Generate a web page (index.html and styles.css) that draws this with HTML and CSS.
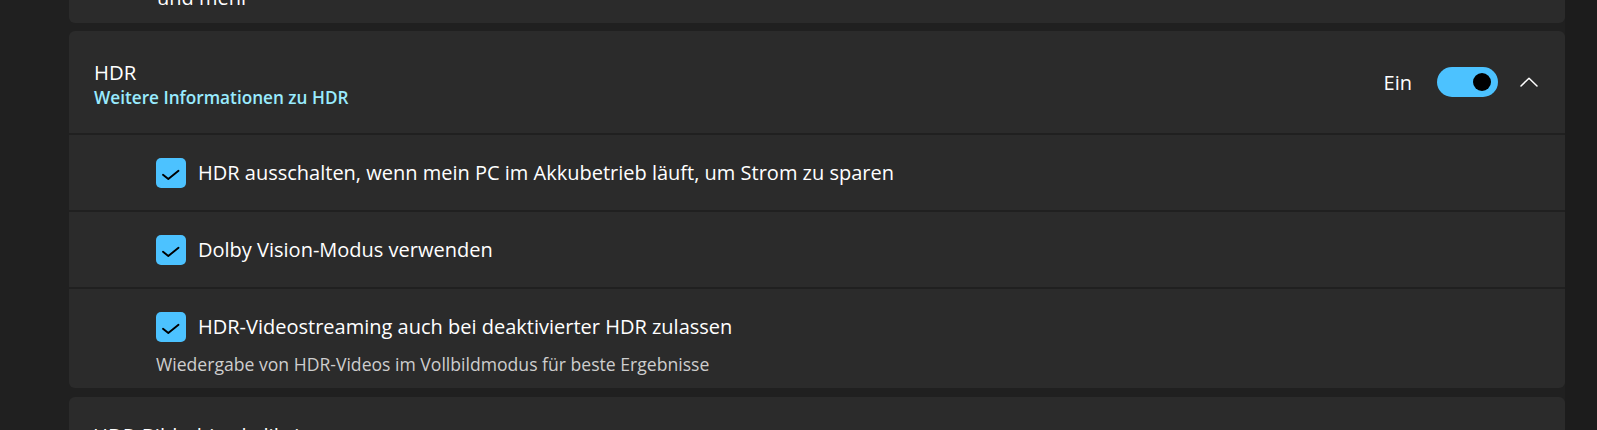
FILE: index.html
```html
<!DOCTYPE html>
<html lang="de">
<head>
<meta charset="utf-8">
<title>HDR</title>
<link rel="stylesheet" href="styles.css">
</head>
<body>
<div class="page">
  <main class="content">
    <section class="card card-prev">
      <div class="prev-text">und mehr</div>
    </section>

    <section class="card expander">
      <div class="exp-header">
        <div class="exp-text">
          <div class="title">HDR</div>
          <a class="link" href="#">Weitere Informationen zu HDR</a>
        </div>
        <div class="exp-controls">
          <span class="state">Ein</span>
          <span class="toggle"><span class="knob"></span></span>
          <svg class="chevron" width="18" height="10" viewBox="0 0 18 10"><polyline points="1,9 9,1.2 17,9" fill="none" stroke="#ffffff" stroke-width="1.5" stroke-linecap="round" stroke-linejoin="round"/></svg>
        </div>
      </div>

      <div class="row">
        <div class="check-line">
          <span class="checkbox"><svg width="30" height="30" viewBox="0 0 30 30"><polyline points="7,16.8 12.3,21 22.5,12.8" fill="none" stroke="#000" stroke-width="1.9" stroke-linecap="round" stroke-linejoin="round"/></svg></span>
          <span class="label">HDR ausschalten, wenn mein PC im Akkubetrieb läuft, um Strom zu sparen</span>
        </div>
      </div>

      <div class="row">
        <div class="check-line">
          <span class="checkbox"><svg width="30" height="30" viewBox="0 0 30 30"><polyline points="7,16.8 12.3,21 22.5,12.8" fill="none" stroke="#000" stroke-width="1.9" stroke-linecap="round" stroke-linejoin="round"/></svg></span>
          <span class="label">Dolby Vision-Modus verwenden</span>
        </div>
      </div>

      <div class="row row-tall">
        <div class="check-line">
          <span class="checkbox"><svg width="30" height="30" viewBox="0 0 30 30"><polyline points="7,16.8 12.3,21 22.5,12.8" fill="none" stroke="#000" stroke-width="1.9" stroke-linecap="round" stroke-linejoin="round"/></svg></span>
          <span class="label">HDR-Videostreaming auch bei deaktivierter HDR zulassen</span>
        </div>
        <div class="desc">Wiedergabe von HDR-Videos im Vollbildmodus für beste Ergebnisse</div>
      </div>
    </section>

    <section class="card card-next">
      <div class="exp-header">
        <div class="exp-text">
          <div class="title">HDR-Bildschirmkalibrierung</div>
          <div class="desc-small">Kalibrieren Sie Ihren Bildschirm</div>
        </div>
      </div>
    </section>
  </main>
  <div class="rightstrip"></div>
</div>
</body>
</html>
```
FILE: styles.css
```css
html, body {
  margin: 0;
  padding: 0;
  height: 430px;
  overflow: hidden;
}
body {
  background: #202020;
  color: #ffffff;
  font-family: "Open Sans", "Noto Sans", sans-serif;
}
.page {
  display: flex;
  height: 430px;
}
.content {
  flex: 0 0 1565px;
  padding-left: 69px;
  box-sizing: border-box;
  display: flex;
  flex-direction: column;
}
.rightstrip {
  flex: 1;
  background: #1c1c1c;
}
.card {
  background: #2b2b2b;
  border-radius: 6px;
  flex-shrink: 0;
}
.card-prev {
  height: 23px;
  overflow: hidden;
  border-radius: 0 0 6px 6px;
  padding-left: 88px;
}
.prev-text {
  font-size: 20px;
  line-height: 28px;
  margin-top: -16px;
}
.expander {
  margin-top: 8px;
  background: transparent;
  display: flex;
  flex-direction: column;
  gap: 2px;
  overflow: hidden;
}
.exp-header {
  background: #2b2b2b;
  height: 102px;
  display: flex;
  align-items: center;
  padding: 0 27px 0 25px;
  flex-shrink: 0;
}
.exp-text {
  flex: 1;
  display: flex;
  flex-direction: column;
  padding-top: 4px;
}
.title {
  font-size: 20.3px;
  line-height: 28px;
  color: #ffffff;
}
.link {
  font-size: 17.2px;
  line-height: 24px;
  font-weight: 600;
  color: #99ebff;
  text-decoration: none;
}
.exp-controls {
  display: flex;
  align-items: center;
}
.state {
  font-size: 20px;
  line-height: 28px;
  margin-right: 25px;
  margin-top: 2px;
}
.toggle {
  width: 61px;
  height: 30px;
  border-radius: 15px;
  background: #4cc2ff;
  display: flex;
  align-items: center;
  justify-content: flex-end;
  padding-right: 7px;
  box-sizing: border-box;
}
.knob {
  width: 18px;
  height: 18px;
  border-radius: 50%;
  background: #000000;
}
.chevron {
  margin-left: 22px;
  display: block;
}
.row {
  background: #2b2b2b;
  height: 75px;
  display: flex;
  flex-direction: column;
  justify-content: center;
  padding-left: 87px;
  box-sizing: border-box;
}
.row-tall {
  height: 99px;
  justify-content: flex-start;
  padding-top: 23px;
}
.check-line {
  display: flex;
  align-items: center;
  gap: 12px;
  height: 30px;
}
.checkbox {
  width: 30px;
  height: 30px;
  border-radius: 5px;
  background: #4cc2ff;
  display: block;
  flex-shrink: 0;
}
.checkbox svg {
  display: block;
}
.label {
  font-size: 20px;
  line-height: 28px;
  white-space: nowrap;
}
.desc {
  font-size: 17.6px;
  line-height: 24px;
  color: #cecece;
  margin-top: 10px;
}
.card-next {
  margin-top: 9px;
}
.card-next .exp-header {
  background: transparent;
  padding-left: 24px;
}
.card-next .exp-text {
  padding-top: 0;
  margin-top: -2px;
}
.desc-small {
  font-size: 17.2px;
  line-height: 24px;
  color: #cecece;
}
```
